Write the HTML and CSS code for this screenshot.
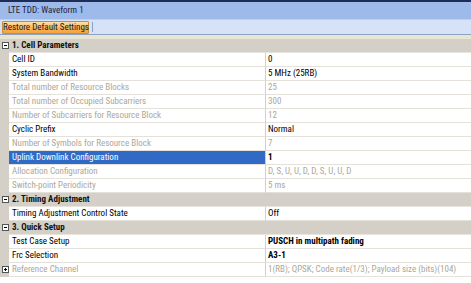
FILE: index.html
```html
<!DOCTYPE html>
<html lang="en">
<head>
    <meta charset="UTF-8">
    <title>LTE TDD: Waveform 1</title>
    <link rel="stylesheet" href="styles.css">
</head>
<body>

    <div id="waveform-panel">
        <div class="titlebar">LTE TDD: Waveform 1</div>

        <div class="toolbar">
            <button class="restore-button">Restore Default Settings</button>
            <span class="toolbar-sep"></span>
        </div>

        <div class="strip"></div>

        <div class="property-grid">
            <!-- 1. Cell Parameters -->
            <div class="category">
                <span class="gutter"><svg class="toggle" width="7" height="7" viewBox="0 0 7 7"><rect x="0.5" y="0.5" width="6" height="6" fill="#fff" stroke="#555"/><path d="M2 3.5h3" stroke="#000"/></svg></span>
                <span class="category-name">1. Cell Parameters</span>
            </div>
            <div class="row">
                <span class="gutter"></span>
                <span class="name">Cell ID</span>
                <span class="value">0</span>
            </div>
            <div class="row">
                <span class="gutter"></span>
                <span class="name">System Bandwidth</span>
                <span class="value">5 MHz (25RB)</span>
            </div>
            <div class="row disabled">
                <span class="gutter"></span>
                <span class="name">Total number of Resource Blocks</span>
                <span class="value">25</span>
            </div>
            <div class="row disabled">
                <span class="gutter"></span>
                <span class="name">Total number of Occupied Subcarriers</span>
                <span class="value">300</span>
            </div>
            <div class="row disabled">
                <span class="gutter"></span>
                <span class="name">Number of Subcarriers for Resource Block</span>
                <span class="value">12</span>
            </div>
            <div class="row">
                <span class="gutter"></span>
                <span class="name">Cyclic Prefix</span>
                <span class="value">Normal</span>
            </div>
            <div class="row disabled">
                <span class="gutter"></span>
                <span class="name">Number of Symbols for Resource Block</span>
                <span class="value">7</span>
            </div>
            <div class="row selected">
                <span class="gutter"></span>
                <span class="name">Uplink Downlink Configuration</span>
                <span class="value bold">1</span>
            </div>
            <div class="row disabled">
                <span class="gutter"></span>
                <span class="name">Allocation Configuration</span>
                <span class="value">D, S, U, U, D, D, S, U, U, D</span>
            </div>
            <div class="row disabled">
                <span class="gutter"></span>
                <span class="name">Switch-point Periodicity</span>
                <span class="value">5 ms</span>
            </div>

            <!-- 2. Timing Adjustment -->
            <div class="category">
                <span class="gutter"><svg class="toggle" width="7" height="7" viewBox="0 0 7 7"><rect x="0.5" y="0.5" width="6" height="6" fill="#fff" stroke="#555"/><path d="M2 3.5h3" stroke="#000"/></svg></span>
                <span class="category-name">2. Timing Adjustment</span>
            </div>
            <div class="row">
                <span class="gutter"></span>
                <span class="name">Timing Adjustment Control State</span>
                <span class="value">Off</span>
            </div>

            <!-- 3. Quick Setup -->
            <div class="category">
                <span class="gutter"><svg class="toggle" width="7" height="7" viewBox="0 0 7 7"><rect x="0.5" y="0.5" width="6" height="6" fill="#fff" stroke="#555"/><path d="M2 3.5h3" stroke="#000"/></svg></span>
                <span class="category-name">3. Quick Setup</span>
            </div>
            <div class="row">
                <span class="gutter"></span>
                <span class="name">Test Case Setup</span>
                <span class="value bold">PUSCH in multipath fading</span>
            </div>
            <div class="row">
                <span class="gutter"></span>
                <span class="name">Frc Selection</span>
                <span class="value bold">A3-1</span>
            </div>
            <div class="row disabled">
                <span class="gutter"><svg class="toggle" width="7" height="7" viewBox="0 0 7 7"><rect x="0.5" y="0.5" width="6" height="6" fill="#fff" stroke="#555"/><path d="M2 3.5h3M3.5 2v3" stroke="#000"/></svg></span>
                <span class="name">Reference Channel</span>
                <span class="value">1(RB); QPSK; Code rate(1/3); Payload size (bits)(104)</span>
            </div>
        </div>
    </div>

</body>
</html>
```
FILE: styles.css
```css
body {
    margin: 0;
    padding: 0;
    background-color: #fff;
    font-family: 'Roboto Condensed', 'DejaVu Sans Condensed', sans-serif;
    font-size: 9px;
    color: #000;
}

#waveform-panel {
    width: 471px;
    height: 283px;
    overflow: hidden;
}

.titlebar {
    height: 17px;
    line-height: 17px;
    padding-left: 8px;
    background-color: #9dbaea;
    border-top: 2px solid #1e2d55;
    border-bottom: 1px solid #bccff0;
    color: #1b2240;
    white-space: nowrap;
}

.toolbar {
    display: flex;
    align-items: center;
    height: 14px;
    padding-left: 2px;
    background-color: #d6e3f7;
    border-bottom: 1px solid #8ba2c2;
}

.restore-button {
    height: 13px;
    width: 87px;
    padding: 0;
    margin: 0;
    font-family: inherit;
    font-size: 9px;
    color: #1a1a1a;
    background: linear-gradient(#fde0ad, #f8b65c 55%, #f4a23c);
    border: 1px solid #c98a3f;
    border-radius: 1px;
    white-space: nowrap;
}

.toolbar-sep {
    width: 1px;
    height: 10px;
    margin-left: 3px;
    background-color: #8ba2c2;
}

.strip {
    height: 4px;
    background-color: #e9e5d3;
}

.property-grid {
    display: flex;
    flex-direction: column;
}

.row,
.category {
    display: flex;
    height: 14px;
    line-height: 13px;
    white-space: nowrap;
}

.gutter {
    display: flex;
    align-items: center;
    justify-content: center;
    width: 9px;
    flex: none;
    background-color: #d4d0c8;
}

.toggle {
    display: block;
    margin-left: 1px;
    margin-bottom: 1px;
}

.category {
    background-color: #d4d0c8;
}

.category-name {
    flex: 1;
    padding-left: 3px;
    font-weight: bold;
    color: #111;
    border-bottom: 1px solid #e7e5de;
}

.name {
    box-sizing: border-box;
    width: 257px;
    flex: none;
    padding-left: 3px;
    border-right: 1px solid #d4d0c8;
    border-bottom: 1px solid #e3e1da;
    overflow: hidden;
}

.value {
    flex: 1;
    padding-left: 2px;
    border-bottom: 1px solid #e3e1da;
    overflow: hidden;
}

.bold {
    font-weight: bold;
}

.disabled .name,
.disabled .value {
    color: #aca899;
}

.selected .name {
    background-color: #316ac5;
    color: #fff;
}
```
